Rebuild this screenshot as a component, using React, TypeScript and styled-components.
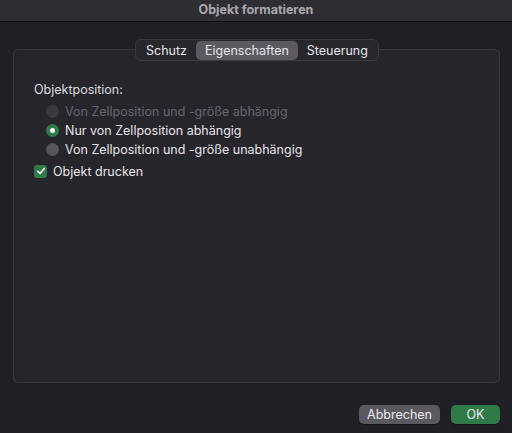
import { createGlobalStyle } from "styled-components";
import styled from "styled-components";

const GlobalStyle = createGlobalStyle`
    html, body {
        margin: 0;
        padding: 0;
        background-color: #201f26;
    }
    body {
        font-family: Inter, "Noto Sans", sans-serif;
        font-size: 12px;
        color: #e3e2e6;
    }
`

const Window = styled.div`
    width: 512px;
    height: 433px;
    display: flex;
    flex-direction: column;
    background-color: #201f26;
    box-sizing: border-box;
    overflow: hidden;
`

const TitleBar = styled.div`
    height: 22px;
    flex-shrink: 0;
    background-color: #2e2d33;
    border-bottom: 1px solid #141318;
    display: flex;
    align-items: center;
    justify-content: center;
    font-weight: 700;
    font-size: 12.5px;
    color: #a9a8ad;
    padding-bottom: 3px;
    box-sizing: border-box;
`

const Content = styled.div`
    flex: 1;
    display: flex;
    flex-direction: column;
    padding: 17px 12px 10px 13px;
`

const TabArea = styled.div`
    position: relative;
    display: flex;
    flex-direction: column;
    height: 344px;
`

const Tabs = styled.div`
    position: absolute;
    top: 0;
    left: 122px;
    z-index: 2;
    display: flex;
    height: 22px;
    padding: 0 1px;
    box-sizing: border-box;
    align-items: center;
    background-color: #28272d;
    border: 1px solid #3b3a40;
    border-radius: 6px;
`

const Tab = styled.div<{ $active?: boolean }>`
    height: 19px;
    display: flex;
    align-items: center;
    padding: 0 9px;
    border-radius: 5px;
    background-color: ${p => p.$active ? "#5b5a60" : "transparent"};
    color: #e6e5e9;
    font-size: 12.5px;
`

const GroupBox = styled.div`
    margin-top: 10px;
    flex: 1;
    background-color: #26252c;
    border: 1px solid #3a3940;
    border-radius: 5px;
    padding: 32px 20px 0 20px;
    display: flex;
    flex-direction: column;
`

const SectionLabel = styled.div`
    color: #dcdbdf;
    font-size: 12.5px;
    margin-bottom: 6px;
`

const RadioList = styled.div`
    display: flex;
    flex-direction: column;
    gap: 3px;
    padding-left: 12px;
`

const Row = styled.label<{ $disabled?: boolean }>`
    display: flex;
    align-items: center;
    gap: 6px;
    height: 16px;
    font-size: 12.5px;
    color: ${p => p.$disabled ? "#67666c" : "#e6e5e9"};
`

const RadioCircle = styled.span<{ $checked?: boolean; $disabled?: boolean }>`
    width: 13px;
    height: 13px;
    border-radius: 50%;
    box-sizing: border-box;
    display: flex;
    align-items: center;
    justify-content: center;
    background: ${p => p.$checked ? "#2f7a48" : p.$disabled ? "#3a393f" : "#56555b"};
    &::after {
        content: "";
        display: ${p => p.$checked ? "block" : "none"};
        width: 5px;
        height: 5px;
        border-radius: 50%;
        background-color: #ffffff;
    }
`

const CheckRow = styled(Row)`
    margin-top: 6px;
`

const CheckBox = styled.span`
    width: 13px;
    height: 13px;
    border-radius: 3px;
    background-color: #2f7a48;
    display: flex;
    align-items: center;
    justify-content: center;
`

const Footer = styled.div`
    display: flex;
    justify-content: flex-end;
    gap: 11px;
    margin-top: 22px;
`

const Button = styled.button<{ $primary?: boolean }>`
    height: 19px;
    padding: 0;
    width: ${p => p.$primary ? "49px" : "81px"};
    border: none;
    border-radius: 5px;
    font-family: inherit;
    font-size: 12.5px;
    color: #ebeaee;
    background-color: ${p => p.$primary ? "#2f7a48" : "#5a595f"};
    box-shadow: 0 1px 1px rgba(0, 0, 0, 0.35);
`

const App = () => {
    return (
        <Window>
            <GlobalStyle />
            <TitleBar>Objekt formatieren</TitleBar>
            <Content>
                <TabArea>
                    <Tabs>
                        <Tab>Schutz</Tab>
                        <Tab $active>Eigenschaften</Tab>
                        <Tab>Steuerung</Tab>
                    </Tabs>
                    <GroupBox>
                        <SectionLabel>Objektposition:</SectionLabel>
                        <RadioList>
                            <Row $disabled><RadioCircle $disabled />Von Zellposition und -größe abhängig</Row>
                            <Row><RadioCircle $checked />Nur von Zellposition abhängig</Row>
                            <Row><RadioCircle />Von Zellposition und -größe unabhängig</Row>
                        </RadioList>
                        <CheckRow>
                            <CheckBox>
                                <svg width="10" height="10" viewBox="0 0 10 10">
                                    <path d="M1.8 5.2 L4 7.4 L8.3 2.4" fill="none" stroke="#fff" strokeWidth="1.6" strokeLinecap="round" strokeLinejoin="round" />
                                </svg>
                            </CheckBox>
                            Objekt drucken
                        </CheckRow>
                    </GroupBox>
                </TabArea>
                <Footer>
                    <Button>Abbrechen</Button>
                    <Button $primary>OK</Button>
                </Footer>
            </Content>
        </Window>
    )
}

export default App;
